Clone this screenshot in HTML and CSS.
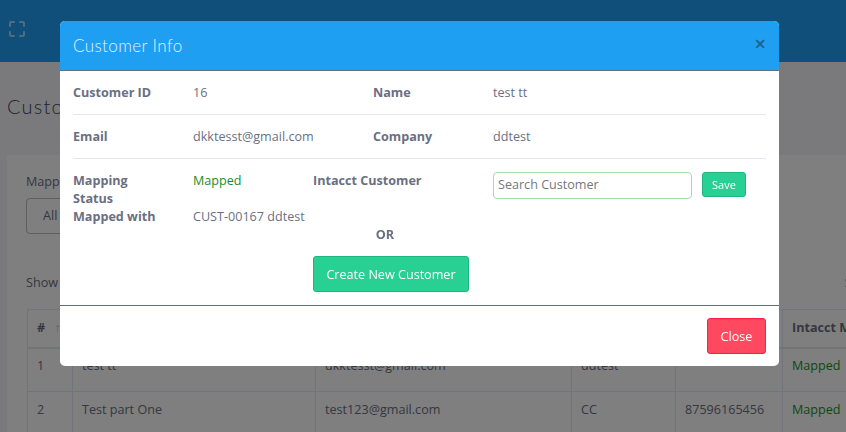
FILE: index.html

```html
<!DOCTYPE html>
<html lang="en">
<head>
    <meta charset="UTF-8">
    <meta name="viewport" content="width=device-width, initial-scale=1.0">
    <title>Customers</title>
    <link rel="stylesheet" href="styles.css">
</head>
<body>

    <header class="topbar">
        <svg class="expand-icon" width="18" height="18" viewBox="0 0 18 18" fill="none" stroke="#fff" stroke-width="2" stroke-linecap="round" stroke-linejoin="round">
            <path d="M2 6V3a1 1 0 0 1 1-1h3M12 2h3a1 1 0 0 1 1 1v3M16 12v3a1 1 0 0 1-1 1h-3M6 16H3a1 1 0 0 1-1-1v-3"/>
        </svg>
    </header>

    <main class="content">
        <h3 class="page-title">Customers</h3>
        <section class="card">
            <label class="filter-label">Mapping Status</label>
            <div class="filter-select">All</div>
            <div class="table-tools">
                <span>Show 10 entries</span>
                <span>Search:</span>
            </div>
            <table class="customers">
                <thead>
                    <tr>
                        <th class="col-num">#<span class="sort">↑</span></th>
                        <th class="col-name">Name</th>
                        <th class="col-email">Email</th>
                        <th class="col-company">Company</th>
                        <th class="col-phone">Phone</th>
                        <th class="col-map">Intacct Mapping</th>
                    </tr>
                </thead>
                <tbody>
                    <tr>
                        <td>1</td>
                        <td>test tt</td>
                        <td>dkktesst@gmail.com</td>
                        <td>ddtest</td>
                        <td></td>
                        <td class="mapped">Mapped</td>
                    </tr>
                    <tr>
                        <td>2</td>
                        <td>Test part One</td>
                        <td>test123@gmail.com</td>
                        <td>CC</td>
                        <td>87596165456</td>
                        <td class="mapped">Mapped</td>
                    </tr>
                </tbody>
            </table>
        </section>
    </main>

    <div class="backdrop"></div>

    <div class="modal">
        <div class="modal-header">
            <h4 class="modal-title">Customer Info</h4>
            <span class="modal-x">×</span>
        </div>
        <div class="modal-body">
            <div class="info-row">
                <strong>Customer ID</strong>
                <span>16</span>
                <strong>Name</strong>
                <span>test tt</span>
            </div>
            <div class="info-row">
                <strong>Email</strong>
                <span>dkktesst@gmail.com</span>
                <strong>Company</strong>
                <span>ddtest</span>
            </div>
            <div class="map-block">
                <div class="map-status">
                    <strong class="narrow">Mapping Status</strong>
                    <span class="mapped-text">Mapped</span>
                    <strong>Mapped with</strong>
                    <span>CUST-00167 ddtest</span>
                </div>
                <div class="map-actions">
                    <div class="search-line">
                        <strong class="intacct">Intacct Customer</strong>
                        <input class="search-input" type="text" placeholder="Search Customer">
                        <button class="btn btn-save">Save</button>
                    </div>
                    <strong class="or-text">OR</strong>
                    <button class="btn btn-create">Create New Customer</button>
                </div>
            </div>
        </div>
        <div class="modal-footer">
            <button class="btn btn-close">Close</button>
        </div>
    </div>

</body>
</html>
```

FILE: styles.css

```css
* {
    box-sizing: border-box;
}
html, body {
    height: 100%;
}
body {
    margin: 0;
    overflow: hidden;
    font-family: "Open Sans", sans-serif;
    font-size: 12.6px;
    color: #6b6f82;
    background-color: #f4f5fa;
}

/* page behind the modal */
.topbar {
    height: 62px;
    padding: 20px 0 0 8px;
    background-color: #1e9ff2;
}
.expand-icon {
    display: block;
    opacity: 0.6;
}
.content {
    padding: 0 0 0 7px;
}
.page-title {
    margin: 0;
    padding-top: 32px;
    height: 93px;
    font-family: "Lato", sans-serif;
    font-size: 20px;
    font-weight: 300;
    letter-spacing: 1.2px;
    color: #464855;
}
.card {
    padding: 18px 0 0 19px;
    width: 900px;
    background-color: #fff;
}
.filter-label {
    display: block;
    height: 25px;
}
.filter-select {
    width: 120px;
    height: 36px;
    padding: 8px 16px;
    border: 1px solid #babfc7;
    border-radius: 4px;
}
.table-tools {
    display: flex;
    justify-content: space-between;
    width: 862px;
    margin-top: 40px;
    height: 35px;
}
.customers {
    table-layout: fixed;
    width: 900px;
    margin-left: 1px;
    border-collapse: collapse;
}
.customers th, .customers td {
    border: 1px solid #e3ebf3;
    padding: 0 9px;
    text-align: left;
}
.customers th {
    height: 38px;
    padding-bottom: 2px;
    border-bottom-width: 2px;
    font-weight: 700;
    white-space: nowrap;
}
.customers td {
    height: 44px;
    padding-bottom: 8px;
}
.sort {
    margin-left: 9px;
    font-weight: 400;
    color: #babfc7;
}
.col-num { width: 45px; }
.col-name { width: 243px; }
.col-email { width: 256px; }
.col-company { width: 104px; }
.col-phone { width: 107px; }
.mapped {
    color: #1a8f1a;
}
.backdrop {
    position: fixed;
    inset: 0;
    background-color: rgba(0, 0, 0, 0.5);
}

/* modal */
.modal {
    position: fixed;
    top: 21px;
    left: 60px;
    width: 719px;
    height: 345px;
    display: flex;
    flex-direction: column;
    background-color: #fff;
    border-radius: 5px;
}
.modal-header {
    height: 50px;
    padding: 0 13px;
    display: flex;
    justify-content: space-between;
    background-color: #1e9ff2;
    border-radius: 5px 5px 0 0;
    border-bottom: 1px solid #626e82;
}
.modal-title {
    margin: 0;
    line-height: 50px;
    font-family: "Lato", sans-serif;
    font-size: 17px;
    font-weight: 300;
    letter-spacing: 0.4px;
    color: #e3f2fd;
}
.modal-x {
    margin: 12px 0 0;
    line-height: 22px;
    font-size: 20px;
    font-weight: 600;
    color: #205f8c;
}
.modal-body {
    flex: 1;
    padding: 0 13px;
}
.info-row {
    display: grid;
    grid-template-columns: 120px 180px 120px 1fr;
    align-items: center;
    height: 44px;
    border-bottom: 1px solid #e4e7ed;
}
.map-block {
    display: grid;
    grid-template-columns: 240px 1fr;
    padding-top: 13px;
}
.map-status {
    display: grid;
    grid-template-columns: 120px 120px;
    grid-auto-rows: min-content;
    line-height: 18px;
    white-space: nowrap;
}
.map-status .narrow {
    white-space: normal;
    width: 80px;
}
.mapped-text {
    color: #1a8f1a;
}
.map-actions {
    display: flex;
    flex-direction: column;
    align-items: flex-start;
}
.search-line {
    display: flex;
    align-items: flex-start;
    height: 27px;
}
.intacct {
    width: 180px;
    line-height: 18px;
}
.search-input {
    width: 199px;
    height: 27px;
    padding: 0 4px 2px;
    border: 1px solid #a5dcb0;
    border-radius: 4px;
    font-family: "Open Sans", sans-serif;
    font-size: 12.6px;
    outline: none;
}
.search-input::placeholder {
    color: #75787d;
}
.btn {
    border-radius: 3px;
    color: #fff;
    font-family: "Open Sans", sans-serif;
    cursor: pointer;
}
.btn-save {
    width: 44px;
    height: 25px;
    margin-left: 10px;
    padding: 0;
    font-size: 11px;
    background-color: #28d094;
    border: 1px solid #1fb57f;
}
.or-text {
    width: 144px;
    margin-top: 27px;
    text-align: center;
    line-height: 18px;
}
.btn-create {
    width: 156px;
    height: 36px;
    margin-top: 12px;
    padding: 0;
    font-size: 12.6px;
    font-weight: 400;
    background-color: #28d094;
    border: 1px solid #1fb57f;
}
.modal-footer {
    height: 61px;
    padding: 12px 13px 0;
    display: flex;
    justify-content: flex-end;
    border-top: 1px solid #626e82;
}
.btn-close {
    width: 59px;
    height: 36px;
    padding: 0;
    font-size: 12.6px;
    background-color: #ff4961;
    border: 1px solid #ff1f3d;
}
```
